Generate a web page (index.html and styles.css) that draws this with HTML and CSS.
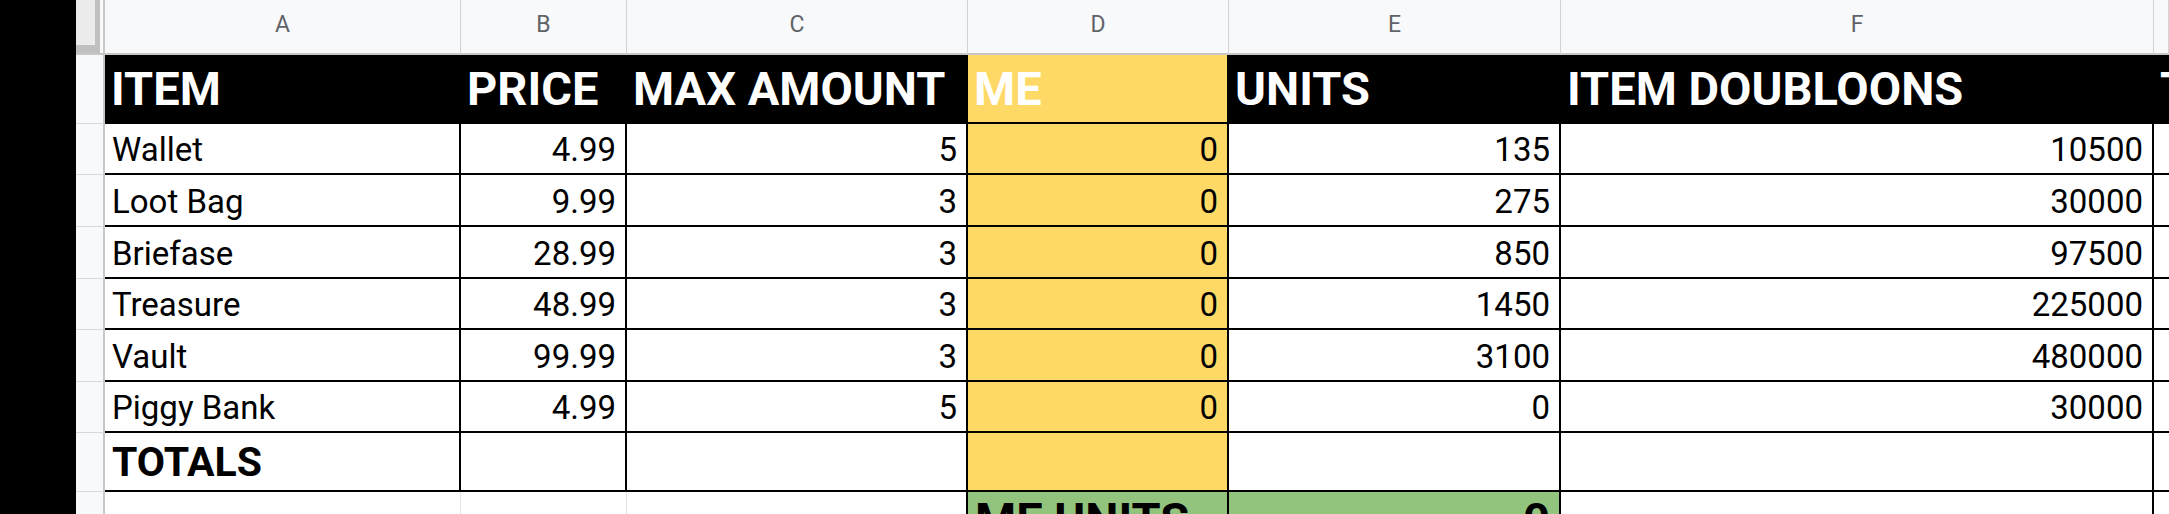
FILE: index.html
```html
<!DOCTYPE html>
<html>
<head>
<meta charset="utf-8">
<link rel="stylesheet" href="styles.css">
</head>
<body>
<div class="screen">
  <div class="side"></div>
  <div class="sheet">
    <div class="corner"><div class="corner-box"></div></div>
    <div class="colhead">A</div>
    <div class="colhead">B</div>
    <div class="colhead">C</div>
    <div class="colhead">D</div>
    <div class="colhead">E</div>
    <div class="colhead">F</div>
    <div class="colhead"></div>

    <div class="rowhead"></div>
    <div class="cell hdr">ITEM</div>
    <div class="cell hdr">PRICE</div>
    <div class="cell hdr">MAX AMOUNT</div>
    <div class="cell hdr me">ME</div>
    <div class="cell hdr">UNITS</div>
    <div class="cell hdr">ITEM DOUBLOONS</div>
    <div class="cell hdr">TOTAL DOUBLOONS</div>

    <div class="rowhead"></div>
    <div class="cell">Wallet</div>
    <div class="cell num">4.99</div>
    <div class="cell num">5</div>
    <div class="cell num yel">0</div>
    <div class="cell num">135</div>
    <div class="cell num">10500</div>
    <div class="cell"></div>

    <div class="rowhead"></div>
    <div class="cell">Loot Bag</div>
    <div class="cell num">9.99</div>
    <div class="cell num">3</div>
    <div class="cell num yel">0</div>
    <div class="cell num">275</div>
    <div class="cell num">30000</div>
    <div class="cell"></div>

    <div class="rowhead"></div>
    <div class="cell">Briefase</div>
    <div class="cell num">28.99</div>
    <div class="cell num">3</div>
    <div class="cell num yel">0</div>
    <div class="cell num">850</div>
    <div class="cell num">97500</div>
    <div class="cell"></div>

    <div class="rowhead"></div>
    <div class="cell">Treasure</div>
    <div class="cell num">48.99</div>
    <div class="cell num">3</div>
    <div class="cell num yel">0</div>
    <div class="cell num">1450</div>
    <div class="cell num">225000</div>
    <div class="cell"></div>

    <div class="rowhead"></div>
    <div class="cell">Vault</div>
    <div class="cell num">99.99</div>
    <div class="cell num">3</div>
    <div class="cell num yel">0</div>
    <div class="cell num">3100</div>
    <div class="cell num">480000</div>
    <div class="cell"></div>

    <div class="rowhead"></div>
    <div class="cell">Piggy Bank</div>
    <div class="cell num">4.99</div>
    <div class="cell num">5</div>
    <div class="cell num yel">0</div>
    <div class="cell num">0</div>
    <div class="cell num">30000</div>
    <div class="cell"></div>

    <div class="rowhead"></div>
    <div class="cell total">TOTALS</div>
    <div class="cell"></div>
    <div class="cell"></div>
    <div class="cell yel"></div>
    <div class="cell"></div>
    <div class="cell"></div>
    <div class="cell"></div>

    <div class="rowhead"></div>
    <div class="cell plain"></div>
    <div class="cell plain"></div>
    <div class="cell plain edge"></div>
    <div class="cell green">ME UNITS</div>
    <div class="cell green num">0</div>
    <div class="cell open"></div>
    <div class="cell open"></div>
  </div>
</div>
</body>
</html>
```

FILE: styles.css
```css
html, body {
  margin: 0;
  padding: 0;
  background: #fff;
}

.screen {
  display: flex;
  width: 2169px;
  height: 514px;
  overflow: hidden;
  background: #fff;
}

.side {
  flex: none;
  width: 76px;
  background: #000;
}

.sheet {
  flex: 1;
  display: grid;
  grid-template-columns: 29px 356px 166px 341px 261px 332px 593px 15px;
  grid-template-rows: 55px 69px 51px 52px 52px 51px 52px 51px 59px 69px;
  font-family: Roboto, "Liberation Sans", sans-serif;
  color: #000;
}

.corner {
  background: #f8f9fa;
  border-right: 2px solid #c7c7c7;
  border-bottom: 2px solid #c7c7c7;
  box-sizing: border-box;
}

.corner-box {
  width: 19px;
  height: 45px;
  background: #ececec;
  border-right: 5px solid #c0c0c0;
  border-bottom: 8px solid #c0c0c0;
}

.colhead {
  box-sizing: border-box;
  background: #f8f9fa;
  border-right: 1px solid #d3d3d3;
  border-bottom: 2px solid #c7c7c7;
  color: #5f6368;
  font-size: 23px;
  text-align: center;
  padding-top: 11px;
  overflow: hidden;
  white-space: nowrap;
}

.rowhead {
  box-sizing: border-box;
  background: #f8f9fa;
  border-right: 2px solid #c7c7c7;
  border-bottom: 1px solid #d9d9d9;
}

.cell {
  box-sizing: border-box;
  display: flex;
  align-items: flex-end;
  border-right: 2px solid #000;
  border-bottom: 2px solid #000;
  padding: 0 9px 4px 7px;
  font-size: 33px;
  white-space: nowrap;
  overflow: hidden;
  background: #fff;
}

.num {
  justify-content: flex-end;
}

.hdr {
  background: #000;
  color: #fff;
  font-weight: 700;
  font-size: 47px;
  padding-bottom: 6px;
  padding-left: 6px;
}

.hdr.me {
  background: #ffd966;
}

.yel {
  background: #ffd966;
}

.total {
  font-weight: 700;
  font-size: 41px;
  padding-bottom: 4px;
}

.plain {
  border-right: 1px solid #e2e3e3;
  border-bottom: 1px solid #e2e3e3;
}

.plain.edge {
  border-right: 2px solid #000;
}

.green {
  background: #93c47d;
  font-weight: 700;
  font-size: 47px;
  padding-bottom: 12px;
}

.open {
  border-bottom: none;
}
```
